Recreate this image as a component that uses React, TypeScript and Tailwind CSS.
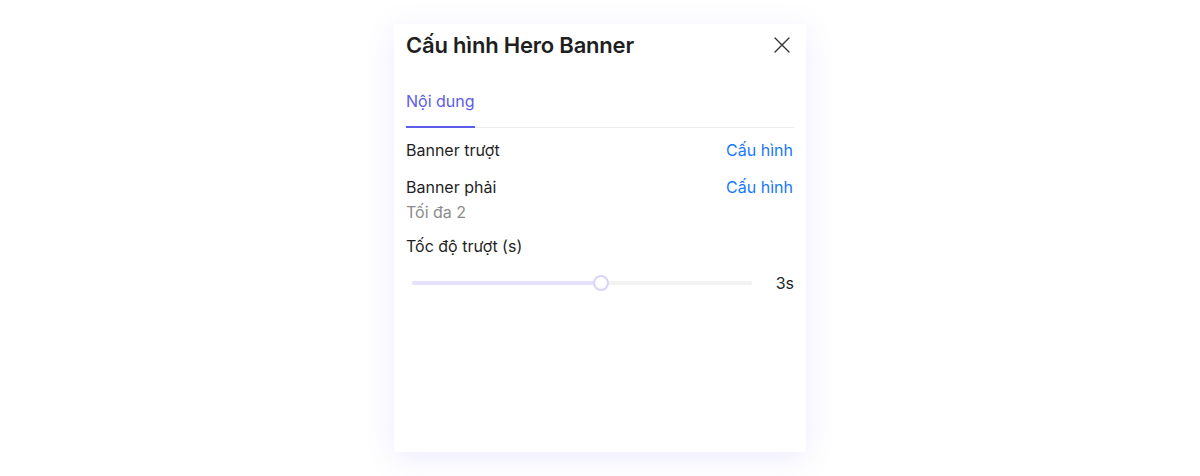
import React from 'react';

const HeroBannerConfig: React.FC = () => {
    const speed = 3;
    const pct = ((speed - 0.5) / (5 - 0.5)) * 100;

    return (
        <div className="min-h-screen bg-white flex justify-center pt-6" style={{ fontFamily: 'Inter, "Noto Sans", sans-serif' }}>
            <div className="w-[412px] h-[428px] bg-white px-3 shadow-[0_6px_28px_rgba(110,100,250,0.13)] flex flex-col">
                {/* Header */}
                <div className="h-[42px] flex items-center justify-between">
                    <h2 className="text-[22px] font-semibold text-[#1f1f1f] tracking-[-0.2px]">Cấu hình Hero Banner</h2>
                    <button className="mr-[4px] text-[#333]">
                        <svg width="16" height="16" viewBox="0 0 16 16" fill="none" stroke="currentColor" strokeWidth="1.4" strokeLinecap="round">
                            <path d="M1 1L15 15M15 1L1 15" />
                        </svg>
                    </button>
                </div>

                {/* Tabs */}
                <div className="mt-[23px] border-b border-[#ececec] flex">
                    <div className="-mb-px pb-[13px] border-b-2 border-[#5b5ce8] text-[16px] leading-6 text-[#5b5ce8]">Nội dung</div>
                </div>

                {/* Rows */}
                <div className="mt-[10px] flex flex-col text-[16px] leading-6 text-[#1f1f1f]">
                    <div className="flex justify-between">
                        <div>Banner trượt</div>
                        <a className="text-[#1677ff] mr-px">Cấu hình</a>
                    </div>
                    <div className="mt-[13px] flex justify-between">
                        <div>
                            <div>Banner phải</div>
                            <div className="mt-px text-[#8c8c8c]">Tối đa 2</div>
                        </div>
                        <a className="text-[#1677ff] mr-px">Cấu hình</a>
                    </div>
                    <div className="mt-[10px]">Tốc độ trượt (s)</div>
                    <div className="mt-[13px] flex items-center gap-6">
                        <div className="flex-1 ml-1.5 relative h-6 flex items-center">
                            <div className="w-full h-1 rounded-full bg-[#f2f2f2]">
                                <div className="h-1 rounded-full bg-[#e4e0fd]" style={{ width: `${pct}%` }} />
                            </div>
                            <div
                                className="absolute w-4 h-4 -ml-2 rounded-full bg-white border-2 border-[#d9d4fc]"
                                style={{ left: `${pct}%` }}
                            />
                        </div>
                        <span>{speed}s</span>
                    </div>
                </div>
            </div>
        </div>
    );
};

export default HeroBannerConfig;
